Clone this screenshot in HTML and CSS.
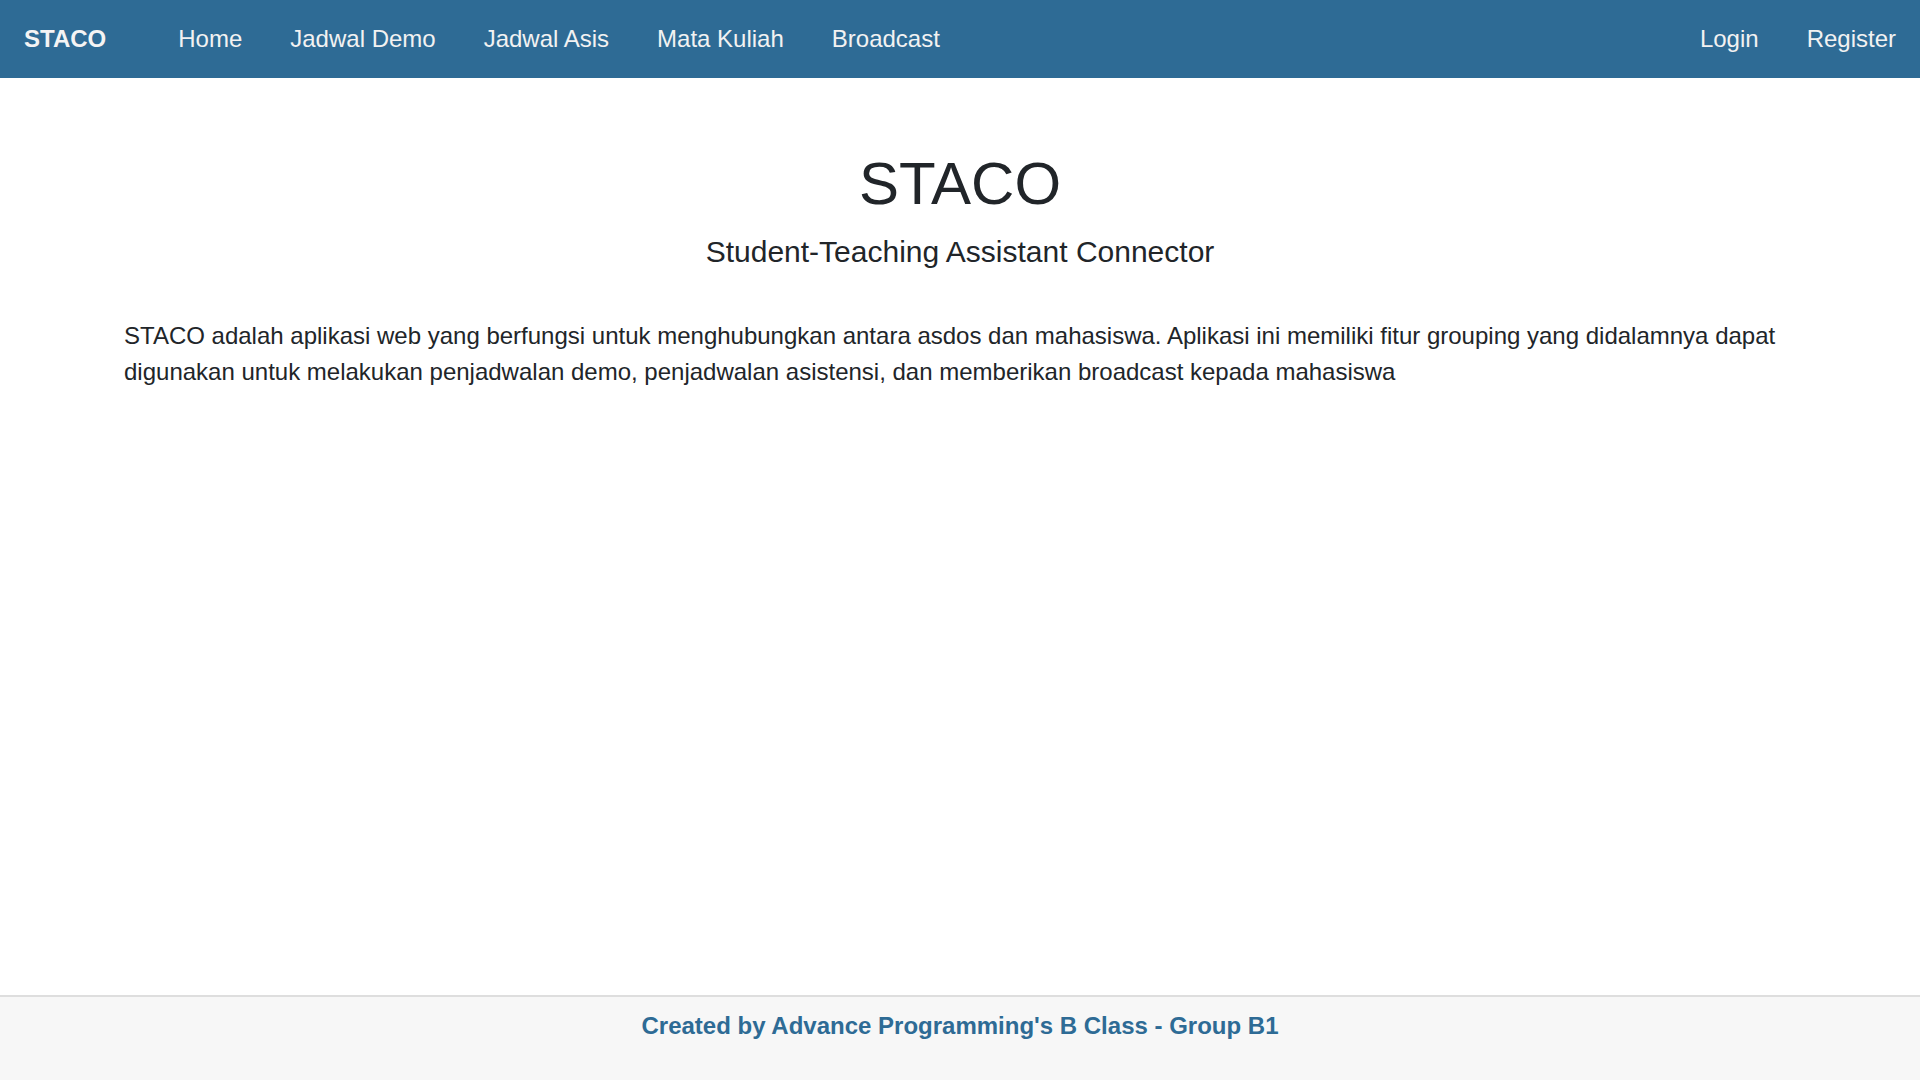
FILE: index.html
```html
<!DOCTYPE html>
<html lang="id">
<head>
<meta charset="utf-8">
<title>STACO</title>
<link rel="stylesheet" href="styles.css">
</head>
<body>
<nav class="navbar">
  <a class="brand" href="#">STACO</a>
  <ul class="nav-links">
    <li><a href="#">Home</a></li>
    <li><a href="#">Jadwal Demo</a></li>
    <li><a href="#">Jadwal Asis</a></li>
    <li><a href="#">Mata Kuliah</a></li>
    <li><a href="#">Broadcast</a></li>
  </ul>
  <ul class="nav-links nav-right">
    <li><a href="#">Login</a></li>
    <li><a href="#">Register</a></li>
  </ul>
</nav>
<main class="content">
  <h1 class="title">STACO</h1>
  <h2 class="subtitle">Student-Teaching Assistant Connector</h2>
  <p class="desc">STACO adalah aplikasi web yang berfungsi untuk menghubungkan antara asdos dan mahasiswa. Aplikasi ini memiliki fitur grouping yang didalamnya dapat digunakan untuk melakukan penjadwalan demo, penjadwalan asistensi, dan memberikan broadcast kepada mahasiswa</p>
</main>
<footer class="footer">
  <p class="credit">Created by Advance Programming's B Class - Group B1</p>
</footer>
</body>
</html>
```

FILE: styles.css
```css
* { box-sizing: border-box; }
html, body { margin: 0; padding: 0; }
body {
  font-family: "Liberation Sans", Arial, sans-serif;
  color: #212529;
  background: #fff;
  min-height: 100vh;
  display: flex;
  flex-direction: column;
}
a { text-decoration: none; }

.navbar {
  height: 78px;
  background: #2e6b95;
  display: flex;
  align-items: center;
  padding: 0 24px;
}
.brand {
  color: #f4f4f4;
  font-weight: bold;
  font-size: 24px;
  line-height: 36px;
  margin-right: 72px;
}
.nav-links {
  list-style: none;
  margin: 0;
  padding: 0;
  display: flex;
  gap: 48px;
}
.nav-links a {
  color: #f2f2f2;
  font-size: 24px;
  line-height: 36px;
}
.nav-right {
  margin-left: auto;
  gap: 48px;
}

.content {
  flex: 1;
  padding: 70px 124px 0;
}
.title {
  margin: 0;
  text-align: center;
  font-weight: normal;
  font-size: 60px;
  line-height: 72px;
}
.subtitle {
  margin: 14px 0 0;
  text-align: center;
  font-weight: normal;
  font-size: 30px;
  line-height: 36px;
}
.desc {
  margin: 48px 0 0;
  font-size: 24px;
  line-height: 36px;
}

.footer {
  background: #f7f7f7;
  border-top: 2px solid #dedede;
  height: 85px;
  padding-top: 11px;
}
.credit {
  margin: 0;
  text-align: center;
  color: #2e6b95;
  font-weight: bold;
  font-size: 24px;
  line-height: 36px;
}
```
